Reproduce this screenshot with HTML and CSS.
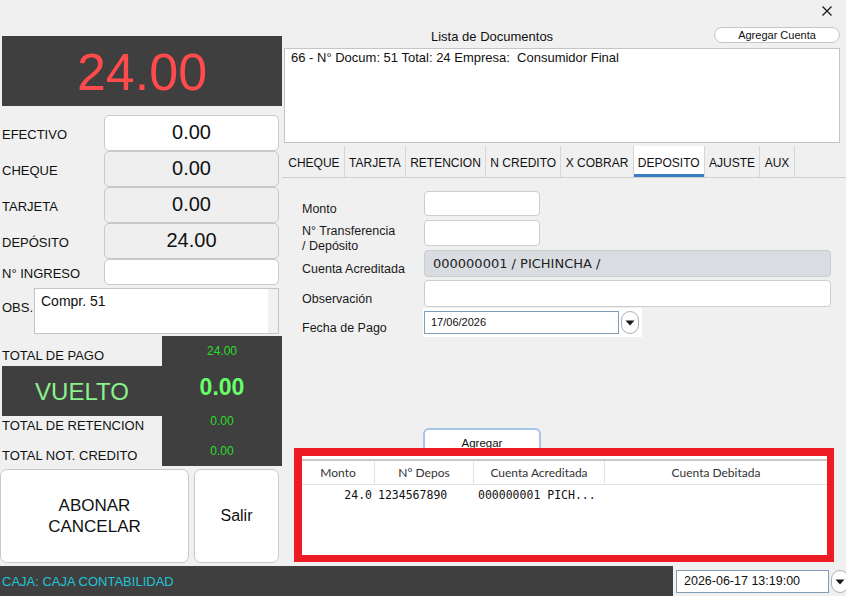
FILE: index.html
```html
<!DOCTYPE html>
<html lang="es">
<head>
<meta charset="utf-8">
<title>Pago</title>
<link rel="stylesheet" href="styles.css">
</head>
<body>
<div class="window">
  <div class="main">
    <div class="left">
      <div class="big-total">24.00</div>
      <div class="fields">
        <div class="flabel">EFECTIVO</div>
        <div class="fbox white">0.00</div>
        <div class="flabel">CHEQUE</div>
        <div class="fbox">0.00</div>
        <div class="flabel">TARJETA</div>
        <div class="fbox">0.00</div>
        <div class="flabel">DEPÓSITO</div>
        <div class="fbox">24.00</div>
        <div class="flabel">N° INGRESO</div>
        <div class="fbox white"></div>
      </div>
      <div class="obs-row">
        <div class="obs-label">OBS.</div>
        <div class="obs-area"><div class="obs-text">Compr. 51</div><div class="obs-scroll"></div></div>
      </div>
      <div class="totals">
        <div class="tlabel t1">TOTAL DE PAGO</div>
        <div class="tval t1v">24.00</div>
        <div class="vuelto">VUELTO</div>
        <div class="tval vuelto-val">0.00</div>
        <div class="tlabel t3">TOTAL DE RETENCION</div>
        <div class="tval t3v">0.00</div>
        <div class="tlabel t4">TOTAL NOT. CREDITO</div>
        <div class="tval t4v">0.00</div>
      </div>
      <div class="actions">
        <div class="btn-big">ABONAR<br>CANCELAR</div>
        <div class="btn-salir">Salir</div>
      </div>
    </div>
    <div class="right">
      <div class="topbar">
        <svg class="close" width="10" height="10" viewBox="0 0 10 10"><path d="M0.5 0.5 L9.5 9.5 M9.5 0.5 L0.5 9.5" stroke="#1a1a1a" stroke-width="1.3" fill="none"/></svg>
      </div>
      <div class="title-row">
        <div class="title">Lista de Documentos</div>
        <div class="btn-cuenta">Agregar Cuenta</div>
      </div>
      <div class="listbox">66 - N° Docum: 51 Total: 24 Empresa:&nbsp; Consumidor Final</div>
      <div class="tabs">
        <div class="tab">CHEQUE</div>
        <div class="tab">TARJETA</div>
        <div class="tab">RETENCION</div>
        <div class="tab">N CREDITO</div>
        <div class="tab">X COBRAR</div>
        <div class="tab active">DEPOSITO</div>
        <div class="tab">AJUSTE</div>
        <div class="tab">AUX</div>
      </div>
      <div class="form">
        <div class="frow r1">
          <div class="lab">Monto</div>
          <div class="inp short"></div>
        </div>
        <div class="frow r2">
          <div class="lab">N° Transferencia<br>/ Depósito</div>
          <div class="inp short"></div>
        </div>
        <div class="frow r3">
          <div class="lab">Cuenta Acreditada</div>
          <div class="inp long grey">000000001 / PICHINCHA /</div>
        </div>
        <div class="frow r4">
          <div class="lab">Observación</div>
          <div class="inp long"></div>
        </div>
        <div class="frow r5">
          <div class="lab">Fecha de Pago</div>
          <div class="date-wrap">
            <div class="date-inp">17/06/2026</div>
            <svg class="dd" width="18" height="23" viewBox="0 0 18 23"><rect x="0.5" y="0.5" width="17" height="22" rx="8.5" fill="#fff" stroke="#b0b0b0"/><path d="M4.5 9.5 H13.5 L9 14.5 Z" fill="#1a1a1a"/></svg>
          </div>
        </div>
      </div>
      <div class="btn-agregar">Agregar</div>
      <div class="redbox">
        <div class="grid-head">
          <div class="gh c1">Monto</div>
          <div class="gh c2">N° Depos</div>
          <div class="gh c3">Cuenta Acreditada</div>
          <div class="gh c4">Cuenta Debitada</div>
        </div>
        <div class="grid-row">
          <div class="gd c1 num">24.0</div>
          <div class="gd c2">1234567890</div>
          <div class="gd c3">000000001 PICH...</div>
          <div class="gd c4"></div>
        </div>
      </div>
    </div>
  </div>
  <div class="status">
    <div class="status-left">CAJA: CAJA CONTABILIDAD</div>
    <div class="status-right">
      <div class="dt-inp">2026-06-17 13:19:00</div>
      <svg class="dd" width="18" height="23" viewBox="0 0 18 23"><rect x="0.5" y="0.5" width="17" height="22" rx="8.5" fill="#fff" stroke="#b0b0b0"/><path d="M4.5 9.5 H13.5 L9 14.5 Z" fill="#1a1a1a"/></svg>
    </div>
  </div>
</div>
</body>
</html>
```

FILE: styles.css
```css
* { box-sizing: border-box; }
html, body { margin: 0; padding: 0; }
body {
  background: #f0f0f0;
  font-family: "Liberation Sans", Arial, sans-serif;
  color: #111;
}
.window { width: 846px; height: 596px; overflow: hidden; display: flex; flex-direction: column; }
.main { display: flex; height: 566px; flex-shrink: 0; }

/* LEFT */
.left { width: 282px; flex-shrink: 0; padding-top: 36px; }
.big-total {
  margin-left: 2px; width: 280px; height: 70px;
  background: #3f3f3f; color: #ff4b4b;
  font-size: 52px; display: flex; align-items: center; justify-content: center;
  padding-top: 1px;
}
.fields {
  margin-top: 9px;
  display: grid;
  grid-template-columns: 104px 175px;
  grid-template-rows: 36px 36px 36px 36px 26px;
}
.flabel { font-size: 13px; padding-left: 2px; padding-top: 2px; display: flex; align-items: center; }
.fbox {
  border: 1px solid #c9c9c9; border-radius: 5px; background: #efefef;
  font-size: 20px; display: flex; align-items: center; justify-content: center;
  padding-bottom: 1px;
}
.fbox.white { background: #fff; }
.obs-row { display: flex; margin-top: 3px; height: 46px; }
.obs-label { width: 34px; font-size: 13px; padding-left: 2px; padding-top: 12px; }
.obs-area { width: 245px; border: 1px solid #c4c4c4; background: #fff; display: flex; }
.obs-text { flex: 1; font-size: 14px; padding: 4px 0 0 6px; }
.obs-scroll { width: 10px; background: #f0f0f0; }

.totals {
  margin-top: 2px;
  display: grid;
  grid-template-columns: 162px 120px;
  grid-template-rows: 30px 50px 25px 25px;
}
.tlabel { font-size: 13px; padding-left: 2px; line-height: 15px; }
.tval { background: #3f3f3f; color: #2bdc2b; font-size: 12px; text-align: center; line-height: 11px; }
.t1 { padding-top: 12px; }
.t1v { padding-top: 10px; }
.vuelto {
  margin-left: 2px; background: #3f3f3f; color: #8cf08c;
  font-size: 24px; display: flex; align-items: center; justify-content: center; padding-top: 2px;
}
.vuelto-val { color: #66ff66; font-size: 23px; font-weight: bold; line-height: 26px; padding-top: 8px; }
.t3 { padding-top: 2px; }
.t3v { padding-top: 0px; }
.t4 { padding-top: 7px; }
.t4v { padding-top: 5px; }

.actions { display: flex; gap: 5px; margin-top: 3px; height: 94px; }
.btn-big {
  width: 189px; background: #fff; border: 1px solid #c9c9c9; border-radius: 7px;
  font-size: 17px; line-height: 21px; text-align: center;
  display: flex; align-items: center; justify-content: center;
}
.btn-salir {
  width: 85px; background: #fff; border: 1px solid #c9c9c9; border-radius: 7px;
  font-size: 16px; display: flex; align-items: center; justify-content: center;
}

/* RIGHT */
.right { width: 564px; flex-shrink: 0; display: flex; flex-direction: column; }
.topbar { height: 24px; display: flex; justify-content: flex-end; padding-right: 14px; padding-top: 6px; }
.title-row { height: 24px; display: flex; align-items: center; }
.title { margin-left: 149px; font-size: 13px; width: 122px; white-space: nowrap; }
.btn-cuenta {
  margin-left: 161px; width: 126px; height: 16px; margin-top: -2px;
  border: 1px solid #c6c6c6; border-radius: 8px; background: #fff;
  font-size: 11px; text-align: center; line-height: 14px;
}
.listbox {
  margin-left: 2px; width: 556px; height: 95px;
  border: 1px solid #c4c4c4; background: #fff;
  font-size: 13px; padding: 1px 6px; white-space: nowrap;
}
.tabs {
  margin-top: 3px; height: 32px; display: flex;
  border-bottom: 1px solid #cfcfcf; padding-left: 2px;
}
.tab {
  font-size: 12px; padding: 2px 4.25px 0; display: flex; align-items: center;
  border-right: 1px solid #d6d6d6; white-space: nowrap;
}
.tab.active { background: #fff; box-shadow: inset 0 -3px 0 #3b7dc4; }

.form { padding-left: 20px; }
.frow { display: flex; align-items: center; }
.lab { width: 122px; font-size: 12.5px; line-height: 15px; padding-top: 11px; color: #1a1a1a; }
.r1 { margin-top: 13px; height: 25px; }
.r2 { margin-top: 4px; height: 26px; }
.r3 { margin-top: 4px; height: 27px; }
.r4 { margin-top: 3px; height: 27px; }
.r5 { margin-top: 1px; height: 29px; }
.inp { height: 100%; border: 1px solid #cdcdcd; border-radius: 4px; background: #fff; }
.inp.short { width: 116px; }
.inp.long { width: 407px; }
.inp.grey {
  background: #d9dce1; border-color: #c9ccd1;
  font-family: "DejaVu Sans", sans-serif; font-size: 13px; color: #222;
  display: flex; align-items: center; padding-left: 8px; padding-bottom: 1px;
}
.date-wrap {
  margin-left: -1px; width: 219px; height: 29px; background: #fff;
  display: flex; align-items: center; padding-left: 1px; gap: 2px;
}
.date-inp {
  width: 195px; height: 23px; border: 1px solid #7f9db9;
  font-size: 11px; padding-left: 6px; display: flex; align-items: center; padding-bottom: 1px;
}

.btn-agregar {
  margin-top: 91px; margin-left: 141px; width: 118px; height: 20px;
  border: 2px solid #a6c6ea; border-bottom: none; border-radius: 6px 6px 0 0;
  background: #fff; font-size: 11.5px; text-align: center; line-height: 27px;
}
.redbox {
  margin-left: 12px; width: 540px; height: 114px;
  border-style: solid; border-color: #ed1c24; border-width: 8px 7px 7px 8px;
  background: #fff; padding-top: 3px;
}
.grid-head { display: flex; height: 26px; border-top: 2px solid #c8c8c8; border-bottom: 1px solid #e2e2e2; }
.gh {
  font-family: Lato, "Open Sans", sans-serif; font-size: 12px; color: #333;
  display: flex; align-items: center; justify-content: center;
  border-right: 1px solid #e2e2e2;
}
.gh.c4 { border-right: none; }
.c1 { width: 73px; }
.c2 { width: 99px; }
.c3 { width: 131px; }
.c4 { flex: 1; }
.grid-row { display: flex; height: 20px; }
.gd {
  font-family: "DejaVu Sans Mono", "Liberation Mono", monospace; font-size: 11.5px; color: #111;
  padding-left: 3px; line-height: 20px; white-space: nowrap;
}
.gd.num { text-align: right; padding-right: 3px; padding-left: 0; }
.gd.c3 { padding-left: 4px; }

/* STATUS */
.status { height: 30px; display: flex; flex-shrink: 0; }
.status-left {
  width: 673px; flex-shrink: 0; background: #3f3f3f; color: #1fc3d6;
  font-size: 13px; padding-left: 2px; display: flex; align-items: center;
}
.status-right { width: 173px; flex-shrink: 0; display: flex; align-items: center; padding-left: 3px; gap: 2px; overflow: hidden; }
.dt-inp {
  width: 153px; height: 23px; background: #fff; border: 1px solid #7f9db9;
  font-size: 12.5px; padding-left: 7px; display: flex; align-items: center; flex-shrink: 0;
}
.dd { flex-shrink: 0; }
```
